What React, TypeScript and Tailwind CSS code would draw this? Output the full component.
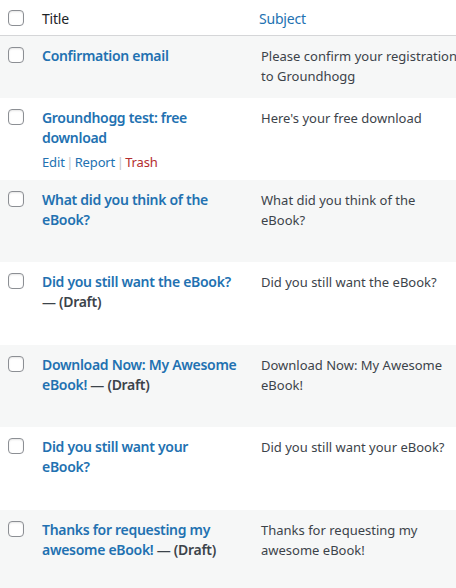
import React from "react";

type Row = {
  title: string[];
  draft?: boolean;
  subject: string[];
  actions?: boolean;
  tall?: boolean;
};

const rows: Row[] = [
  { title: ["Confirmation email"], subject: ["Please confirm your registration", "to Groundhogg"] },
  { title: ["Groundhogg test: free", "download"], subject: ["Here's your free download"], actions: true },
  { title: ["What did you think of the", "eBook?"], subject: ["What did you think of the", "eBook?"] },
  { title: ["Did you still want the eBook?", ""], draft: true, subject: ["Did you still want the eBook?"], tall: true },
  { title: ["Download Now: My Awesome", "eBook!"], draft: true, subject: ["Download Now: My Awesome", "eBook!"] },
  { title: ["Did you still want your", "eBook?"], subject: ["Did you still want your eBook?"], tall: true },
  { title: ["Thanks for requesting my", "awesome eBook!"], draft: true, subject: ["Thanks for requesting my", "awesome eBook!"] },
];

function Box() {
  return (
    <div className="w-4 h-4 rounded-[4px] border border-[#8c8f94] bg-white shadow-[inset_0_1px_2px_rgba(0,0,0,0.1)]" />
  );
}

function Title({ r }: { r: Row }) {
  const last = r.title.length - 1;
  return (
    <div className="text-[14px] leading-[20px] tracking-[-0.3px]">
      {r.title.map((line, i) => (
        <div key={i} className="whitespace-nowrap">
          {line && <span className="font-semibold text-[#2271b1]">{line}</span>}
          {r.draft && i === last && (
            <span className="font-semibold text-[#3c434a]">{line ? " " : ""}— (Draft)</span>
          )}
        </div>
      ))}
    </div>
  );
}

export default function App() {
  return (
    <div className="w-[456px] h-[588px] overflow-hidden bg-white font-['Noto_Sans',sans-serif] text-[#3c434a]">
      <div className="grid grid-cols-[32px_217px_1fr] h-[36px] border-b border-[#d5d6d8] items-center text-[14px] tracking-[-0.2px]">
        <div className="pl-2 pt-px">
          <Box />
        </div>
        <div className="pl-[10px] pt-[2px] text-[#1d2327]">Title</div>
        <div className="pl-[10px] pt-[2px] text-[#2271b1]">Subject</div>
      </div>
      {rows.map((r, idx) => (
        <div
          key={idx}
          className={`grid grid-cols-[32px_217px_1fr] pt-[10px] ${r.tall ? "pb-[10px]" : "pb-[9px]"} ${
            idx % 2 === 0 ? "bg-[#f6f7f7]" : "bg-white"
          }`}
        >
          <div className="pl-2 pt-[1px]">
            <Box />
          </div>
          <div className="pl-[10px]">
            <Title r={r} />
            <div
              className={`mt-[5px] text-[13px] leading-[18px] tracking-[-0.15px] whitespace-nowrap ${
                r.actions ? "" : "invisible"
              }`}
            >
              <span className="text-[#2271b1]">Edit</span>
              <span className="text-[#c3c4c7] px-[1.5px]">|</span>
              <span className="text-[#2271b1]">Report</span>
              <span className="text-[#c3c4c7] px-[1.5px]">|</span>
              <span className="text-[#b32d2e]">Trash</span>
            </div>
          </div>
          <div className="pl-[12px] text-[13px] leading-[20px]">
            {r.subject.map((s, i) => (
              <div key={i} className="whitespace-nowrap">
                {s}
              </div>
            ))}
          </div>
        </div>
      ))}
    </div>
  );
}
